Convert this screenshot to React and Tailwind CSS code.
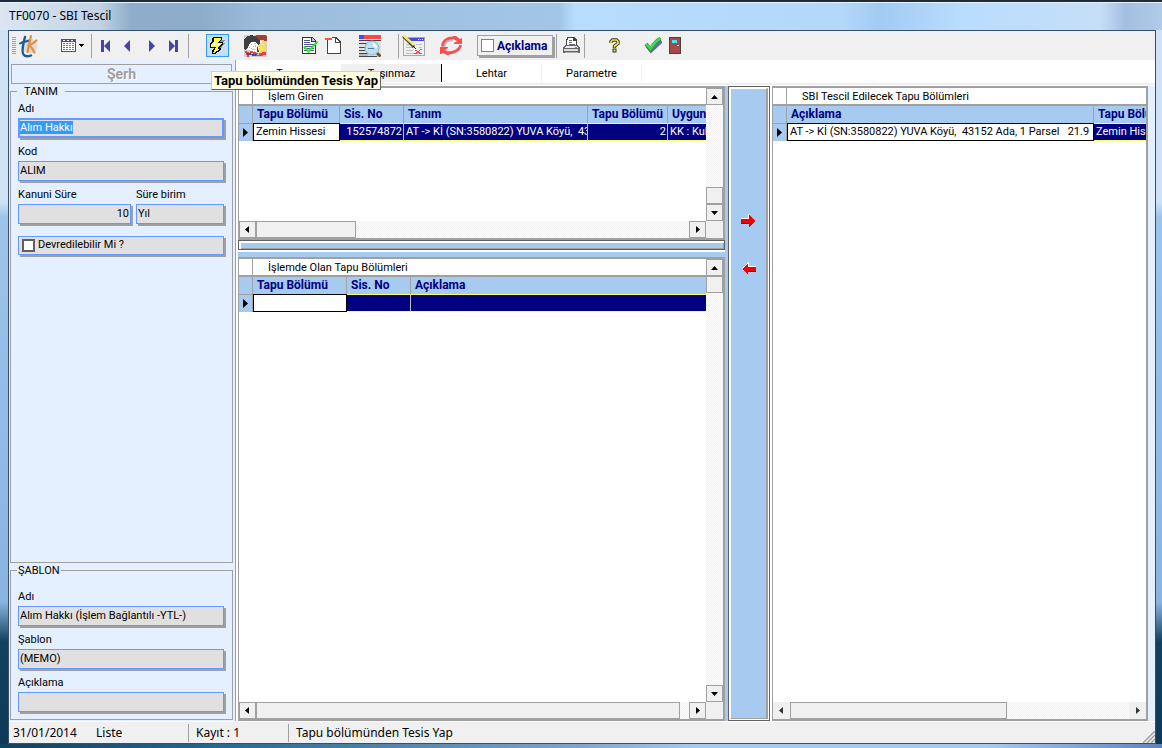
import { useEffect, useRef } from "react";
import clsx from "clsx";

const tabs = ["Tanım", "Taşınmaz", "Lehtar", "Parametre"];

const girenColumns = [
  { title: "Tapu Bölümü", width: "w-[87px]" },
  { title: "Sis. No", width: "w-[64px]", right: true },
  { title: "Tanım", width: "w-[184px]" },
  { title: "Tapu Bölümü", width: "w-[80px]", right: true },
  { title: "Uygunluk", width: "w-[120px]" },
];

const girenRow = [
  "Zemin Hissesi",
  "152574872",
  "AT -> Kİ (SN:3580822) YUVA Köyü,  43152 Ada",
  "2",
  "KK : Kullanım",
];

const olanColumns = [
  { title: "Tapu Bölümü", width: "w-[94px]" },
  { title: "Sis. No", width: "w-[64px]" },
  { title: "Açıklama", width: "w-[600px]" },
];

const tescilColumns = [
  { title: "Açıklama", width: "w-[307px]" },
  { title: "Tapu Bölümü", width: "w-[120px]" },
];

const tescilRow = [
  "AT -> Kİ (SN:3580822) YUVA Köyü,  43152 Ada, 1 Parsel   21.9",
  "Zemin Hissesi",
];

const Separator = ({ className }) => (
  <div className={clsx("h-6 w-px shrink-0 bg-[#a0a0a0]", className)} />
);

const ToolButton = ({ label, className, children }) => (
  <button
    type="button"
    aria-label={label}
    className={clsx("flex h-6 shrink-0 items-center justify-center", className)}
  >
    {children}
  </button>
);

const LogoIcon = () => (
  <svg width="22" height="24" viewBox="0 0 22 24" fill="none" strokeLinecap="round">
    <circle cx="12" cy="12" r="7.5" fill="#dcdde0" />
    <path d="M7 3C5.500 9 3 17 5.500 20.500C7 22.500 10.500 22.500 13 21.500" stroke="#1b5c97" strokeWidth="2.400" />
    <path d="M2 9.500C5 7.500 9 7.500 12 6.500" stroke="#1b5c97" strokeWidth="2" />
    <path d="M13 2C11.500 8 10.500 13 9.500 18" stroke="#f08a3c" strokeWidth="2.200" />
    <path d="M18.500 6.500C16 9 13 10.500 11 11.500C13.500 13 15 15.500 16.500 18.500" stroke="#f08a3c" strokeWidth="2.200" />
  </svg>
);

const CalendarIcon = () => (
  <svg width="24" height="14" viewBox="0 0 24 14" shapeRendering="crispEdges">
    <path d="M0 0h15v13H0z" fill="#4848a8" />
    <path d="M1 3h13v9H1z" fill="#fff" />
    <path d="M2 1h2v1H2zM6 1h2v1H6zM10 1h2v1h-2z" fill="#fff" />
    <path d="M2 4h2v1H2zM5 4h2v1H5zM8 4h2v1H8zM11 4h2v1h-2zM2 6h2v1H2zM5 6h2v1H5zM8 6h2v1H8zM11 6h2v1h-2zM2 8h2v1H2zM5 8h2v1H5zM8 8h2v1H8zM11 8h2v1h-2zM2 10h2v1H2zM5 10h2v1H5zM8 10h2v1H8zM11 10h2v1h-2z" fill="#777" />
    <path d="M18 5h5v1h-1v1h-1v1h-1v-1h-1v-1h-1z" fill="#000" />
  </svg>
);

const NavIcon = ({ flip, bar }) => (
  <svg width="10" height="12" viewBox="0 0 10 12" className={clsx(flip && "-scale-x-100")}>
    {bar && <path d="M1 0h3v12H1z" fill="#4545a8" />}
    <path d={bar ? "M10 0v12L4 6z" : "M8 0v12L2 6z"} fill="#4545a8" />
  </svg>
);

const LightningIcon = () => (
  <svg width="17" height="18" viewBox="0 0 17 18" shapeRendering="crispEdges">
    <path d="M10 3h6l-2 3h2l-3 4h1l-8 7H6l2-7z" fill="#909090" />
    <path d="M4 0h9v2l-2 3h3v2l-4 4h2v2l-6 4H3v-3l2-3H1V7l2-3V2z" fill="#000" />
    <path d="M5 1h7v1L9 5v1h4L9 10v2h2l-6 4H4l3-6H2V8l3-4V3z" fill="#ffff40" />
    <path d="M6 2h2v1H6zM5 4h1v2H5zM5 7h2v1H5zM9 7h1v1H9zM6 12h1v1H6z" fill="#fff" />
  </svg>
);

const PeopleIcon = () => (
  <svg width="23" height="22" viewBox="0 0 23 22" shapeRendering="crispEdges">
    <path d="M0 0h23v22H0z" fill="#d0d0d0" />
    <path d="M12 0h9l2 1v5h-3V5h-5l-2-2z" fill="#a04040" />
    <path d="M15 5h5l1 2v4h1v2h-1v3h-3v2h-5v-8l2-1z" fill="#f8dc60" />
    <path d="M16 6h2v2h-2zM18 9h2v1h-2zM14 12h2v1h-2zM17 14h2v1h-2zM15 16h1v1h-1z" fill="#fff" />
    <path d="M0 9V4l3-3 5-1 5 2 3 4v2l-2 2-2-2H8l-3 2v3H3l-1 2-2-1z" fill="#404040" />
    <path d="M13 12h1v3h1v2h-3v-3z" fill="#704040" />
    <path d="M5 9l3-2h4l2 3-1 3v4H7l-1-2H3l1-2z" fill="#fff" />
    <path d="M7 9h1v1H7zM10 8h2v1h-2zM11 10h1v2h-1zM9 11h1v1H9zM5 12h1v1H5zM8 14h3v1H8zM7 13h1v1H7zM10 16h1v1h-1z" fill="#bbb" />
    <path d="M1 16h2v1h2v2h4v1H5v2H3v-2H2v-2H1z" fill="#e04040" />
    <path d="M3 18h4v1h6v1h4v1H8v-1H3z" fill="#4848a8" />
    <path d="M6 16h3v1h3v1h2v1H9v-1H6zM12 20h3v-2h3v-1h4v3h-3v1h-7z" fill="#e84040" />
  </svg>
);

const DocCheckIcon = () => (
  <svg width="16" height="17" viewBox="0 0 16 17" shapeRendering="crispEdges">
    <path d="M0 0h10l4 4v13H0z" fill="#333" />
    <path d="M1 1h8v4h4v11H1z" fill="#fff" />
    <path d="M10 1v3h3z" fill="#ccc" />
    <path d="M2 3h6v1H2zM2 5h6v1H2zM2 7h10v1H2zM2 9h10v1H2zM2 11h10v1H2zM2 13h10v1H2z" fill="#50508c" />
    <path d="M2 9.500l4.500 5L15.500 4.500" fill="none" stroke="#30e830" strokeWidth="2" shapeRendering="auto" />
  </svg>
);

const DocRemoveIcon = () => (
  <svg width="16" height="17" viewBox="0 0 16 17" shapeRendering="crispEdges">
    <path d="M2 0h9l5 5v12H2z" fill="#444" />
    <path d="M3 1h7v5h5v10H3z" fill="#fff" />
    <path d="M11 2v3h3z" fill="#fff" />
    <path d="M0 0h7v1H0z" fill="#f0f0f0" />
    <path d="M0 1h7v2H0z" fill="#f85840" />
  </svg>
);

const TableSearchIcon = () => (
  <svg width="22" height="22" viewBox="0 0 22 22">
    <path d="M0 0h5v4H0z" fill="#4848e8" />
    <path d="M5 0h17v4H5z" fill="#ff4848" />
    <path d="M0 4h22v18H0z" fill="#e0e0e0" />
    <path d="M0 5h22v1H0zM0 8h8v1H0zM0 12h8v1H0zM0 15h6v1H0zM0 18h9v1H0zM0 21h18v1H0z" fill="#444" />
    <path d="M0 19h9v2H0z" fill="#bbb" />
    <path d="M17.500 17.500l4 4" stroke="#6a5030" strokeWidth="3" />
    <circle cx="13" cy="13" r="7" fill="#b8dff5" stroke="#98b0c0" />
    <path d="M9 13.500h6" stroke="#5a7a98" />
    <path d="M13 8c3 0 5 2 5 5l-3-1z" fill="#f0fbff" />
  </svg>
);

const PenFormIcon = () => (
  <svg width="23" height="21" viewBox="0 0 23 21" shapeRendering="crispEdges">
    <path d="M1 2h22v19H1z" fill="#a8a8a8" />
    <path d="M2 3h20v17H2z" fill="#f0f0f0" />
    <path d="M6 3h16v3H6z" fill="#4848e0" />
    <path d="M16 4h1v1h-1zM18 4h1v1h-1zM20 4h1v1h-1z" fill="#fff" />
    <path d="M4 9h4v1H4zM14 9h6v1h-6zM4 12h7v1H4zM17 12h3v1h-3zM4 15h7v1H4zM4 18h16v1H4z" fill="#c0c0c0" />
    <path d="M1 1l11 11" stroke="#444" strokeWidth="3" shapeRendering="auto" />
    <path d="M1 0l11 10" stroke="#f0ec60" strokeWidth="2.400" shapeRendering="auto" />
    <path d="M11 11l3 3" stroke="#222" />
    <path d="M13 15h2v1h2v-1h1v-1h2v1h-2v1h-1v1h1v1h2v1h-3v-1h-2v1h-3v-1h2v-1h1v-1h-2z" fill="#f04848" />
  </svg>
);

const RefreshIcon = () => (
  <svg width="23" height="20" viewBox="0 0 23 20" fill="none">
    <path d="M13 4C8 3.500 4 7 4.500 11M20.500 10C19 14 14 18 8 17.500" stroke="#b8b8b8" strokeWidth="2" />
    <path d="M14 2C8 1 2 5 2.500 10.500M20.500 9C20.500 13 14 17.500 8 16.500" stroke="#f85050" strokeWidth="2.600" />
    <path d="M13 0h3l4 3 2-1v6h-8V7l3-2-4-2z" fill="#f85050" />
    <path d="M9 19H7l-4-2-2 1H0v-7h8v1l-3 2 4 2z" fill="#f85050" />
  </svg>
);

const PrinterIcon = () => (
  <svg width="17" height="17" viewBox="0 0 17 17" shapeRendering="crispEdges">
    <path d="M4 0h7l3 3v6H3V4z" fill="#444" />
    <path d="M5 1h5v3h3v5H4V5z" fill="#fff" />
    <path d="M6 3h3v1H6zM6 5h3v1H6zM6 7h6v1H6z" fill="#666" />
    <path d="M2 8h13l2 3v5H0v-5z" fill="#666" />
    <path d="M3 9h11l1 2H2z" fill="#eee" />
    <path d="M1 12h14v2H1z" fill="#ddd" />
    <path d="M12 10h2v1h-2z" fill="#e06060" />
    <path d="M2 15h13v1H2z" fill="#aaa" />
  </svg>
);

const HelpIcon = () => (
  <svg width="11" height="15" viewBox="0 0 11 15" fill="none">
    <path d="M2 5V3.500L3.500 2h4L9 3.500V5.500L5.500 8v2" stroke="#333" strokeWidth="3.400" />
    <path d="M3.500 10.500h4v4h-4z" fill="#333" />
    <path d="M2 5V3.500L3.500 2h4L9 3.500V5.500L5.500 8v1.500" stroke="#f4ec30" strokeWidth="1.600" />
    <path d="M4.500 11.500h2v2h-2z" fill="#f4ec30" />
  </svg>
);

const AcceptIcon = () => (
  <svg width="18" height="17" viewBox="0 0 18 17" fill="none">
    <path d="M3 9l4 5L17.500 4" stroke="#6868b0" strokeWidth="3.500" />
    <path d="M2 7l4.500 5.500C9 8 12 4 16.500 1.500" stroke="#309838" strokeWidth="3.800" />
    <path d="M2 7l4.500 4.500C9 7.500 12 4 16.500 1" stroke="#48d850" strokeWidth="2.400" />
  </svg>
);

const DoorIcon = () => (
  <svg width="12" height="17" viewBox="0 0 12 17" shapeRendering="crispEdges">
    <path d="M0 0h12v17H0z" fill="#444" />
    <path d="M1 1h10v15H1z" fill="#a84848" />
    <path d="M3 3h5v3H3z" fill="#40e8f0" />
    <path d="M8 8h2v1H8z" fill="#e8e040" />
  </svg>
);

const MoveIcon = ({ flip }) => (
  <svg width="15" height="14" viewBox="0 0 15 14" className={clsx(flip && "-scale-x-100")} shapeRendering="crispEdges">
    <path d="M0 4h7V0l7 6H0z" fill="#fff" />
    <path d="M0 5h8V1l6 6-6 6v-3H0z" fill="#f00000" />
    <path d="M0 9h8v1H0z" fill="#900000" />
  </svg>
);

const Toolbar = () => (
  <div className="flex h-[29px] shrink-0 items-center bg-[#f0f0f0] pl-[3px]">
    <div className="h-[18px] w-1 shrink-0 bg-[repeating-linear-gradient(#a0a0a0_0_1px,#f0f0f0_1px_2px)]" />
    <ToolButton label="Takbis" className="ml-px w-6">
      <LogoIcon />
    </ToolButton>
    <ToolButton label="Liste" className="ml-[19px] w-[26px]">
      <CalendarIcon />
    </ToolButton>
    <Separator className="ml-[5px]" />
    <ToolButton label="İlk kayıt" className="ml-[2px] w-[22px]">
      <NavIcon bar />
    </ToolButton>
    <ToolButton label="Önceki kayıt" className="w-[22px]">
      <NavIcon />
    </ToolButton>
    <ToolButton label="Sonraki kayıt" className="ml-[3px] w-[22px]">
      <NavIcon flip />
    </ToolButton>
    <ToolButton label="Son kayıt" className="w-[22px]">
      <NavIcon flip bar />
    </ToolButton>
    <Separator className="ml-[3px]" />
    <div className="relative ml-[17px] shrink-0">
      <button
        type="button"
        aria-describedby="tesis-tip"
        aria-label="Tesis Yap"
        className="flex h-[23px] w-[23px] items-center justify-center border border-[#3399ff] bg-[#c2e0ff]"
      >
        <LightningIcon />
      </button>
      <div
        id="tesis-tip"
        role="tooltip"
        className="absolute top-[37px] left-[5px] z-10 border border-[#606060] border-t-[#d0d0c0] border-l-[#d0d0c0] bg-[#ffffe1] px-[2px] text-[13px] leading-[17px] font-bold whitespace-nowrap"
      >
        Tapu bölümünden Tesis Yap
      </div>
    </div>
    <ToolButton label="Kişiler" className="ml-[14px] w-6">
      <PeopleIcon />
    </ToolButton>
    <ToolButton label="Belge onayla" className="ml-[31px] w-6">
      <DocCheckIcon />
    </ToolButton>
    <ToolButton label="Belge çıkar" className="w-[22px]">
      <DocRemoveIcon />
    </ToolButton>
    <ToolButton label="Sorgula" className="ml-[14px] w-6">
      <TableSearchIcon />
    </ToolButton>
    <Separator className="ml-4" />
    <ToolButton label="Düzenle" className="ml-[2px] w-6">
      <PenFormIcon />
    </ToolButton>
    <ToolButton label="Yenile" className="ml-[14px] w-6">
      <RefreshIcon />
    </ToolButton>
    <label className="ml-[14px] flex h-[21px] w-[76px] shrink-0 items-center gap-[3px] border border-[#a0a0a0] pl-[3px] text-xs font-bold text-[#000080] shadow-[2px_2px_0_#a0a0a0]">
      <input type="checkbox" className="size-[13px] shrink-0 appearance-none border border-[#808080] bg-white" />
      Açıklama
    </label>
    <Separator className="ml-[3px]" />
    <ToolButton label="Yazdır" className="ml-[2px] w-6">
      <PrinterIcon />
    </ToolButton>
    <Separator className="ml-px" />
    <ToolButton label="Yardım" className="ml-[17px] w-6">
      <HelpIcon />
    </ToolButton>
    <ToolButton label="Tamam" className="ml-[15px] w-6">
      <AcceptIcon />
    </ToolButton>
    <ToolButton label="Çıkış" className="w-5">
      <DoorIcon />
    </ToolButton>
  </div>
);

const Field = ({ id, label, value, className, right, active }) => {
  const ref = useRef(null);

  useEffect(() => {
    if (active) {
      ref.current.focus();
      ref.current.select();
    }
  }, [active]);

  return (
    <div className={clsx("flex flex-col gap-[3px]", className)}>
      <label htmlFor={id} className="h-[14px] leading-[16px]">
        {label}
      </label>
      <input
        id={id}
        ref={ref}
        readOnly
        defaultValue={value}
        className={clsx(
          "h-[20px] w-full border-[#6699ff] bg-[#e0e0e0] pb-[2px] shadow-[2px_2px_0_#a0a0a0] outline-none selection:bg-[#3399ff] selection:text-white",
          active ? "border-2" : "border px-px",
          right && "text-right"
        )}
      />
    </div>
  );
};

const SidePanel = () => (
  <aside className="flex w-[227px] shrink-0 flex-col border-r border-[#a0a0a0] bg-[#e4f0ff] pt-1 pr-[2px] pl-px">
    <h1 className="mx-px h-5 border border-[#a0a0a0] text-center text-sm leading-[19px] font-bold text-[#a0a0a0] [text-shadow:1px_1px_0_#fff]">
      Şerh
    </h1>
    <fieldset className="min-w-0 flex-1 border border-[#a0a0a0]">
      <legend className="ml-[6px] h-[14px] px-[7px] leading-[16px]">TANIM</legend>
      <div className="flex flex-col gap-[6px] pt-[3px] pr-[8px] pl-[7px]">
        <Field id="tanim-adi" label="Adı" value="Alım Hakkı" active />
        <Field id="tanim-kod" label="Kod" value="ALIM" />
        <div className="flex gap-[5px]">
          <Field id="kanuni-sure" label="Kanuni Süre" value="10" right className="w-[113px]" />
          <Field id="sure-birim" label="Süre birim" value="Yıl" className="min-w-0 flex-1" />
        </div>
        <label className="mt-[6px] flex h-[19px] items-center gap-[3px] border border-[#6699ff] bg-[#e0e0e0] pl-[3px] shadow-[2px_2px_0_#a0a0a0]">
          <input type="checkbox" className="size-[13px] appearance-none border-2 border-[#606060] bg-white" />
          Devredilebilir Mi ?
        </label>
      </div>
    </fieldset>
    <fieldset className="mb-px min-w-0 border border-[#a0a0a0]">
      <legend className="ml-[6px] h-[14px] px-px leading-[16px]">ŞABLON</legend>
      <div className="flex flex-col gap-[6px] pt-3 pr-[8px] pb-[7px] pl-[7px]">
        <Field id="sablon-adi" label="Adı" value="Alım Hakkı (İşlem Bağlantılı -YTL-)" />
        <Field id="sablon" label="Şablon" value="(MEMO)" />
        <Field id="sablon-aciklama" label="Açıklama" value="" />
      </div>
    </fieldset>
  </aside>
);

const arrows = {
  up: "M0 6h7L3.500 2z",
  down: "M0 2h7L3.500 6z",
  left: "M5 0v7L1 3.500z",
  right: "M2 0v7l4-3.500z",
};

const ScrollButton = ({ dir, flat }) => (
  <button
    type="button"
    aria-label={dir}
    className={clsx(
      "flex size-[17px] shrink-0 items-center justify-center bg-[#f0f0f0]",
      !flat && "border border-[#a0a0a0]"
    )}
  >
    <svg width="7" height="7" viewBox="0 0 7 7">
      <path d={arrows[dir]} fill={flat ? "#333" : "#000"} />
    </svg>
  </button>
);

const track = "bg-[repeating-conic-gradient(#ffffff_0_25%,#f0f0f0_0_50%)] bg-[length:2px_2px]";

const VScroll = ({ atEnd }) => (
  <div className={clsx("flex w-[17px] shrink-0 flex-col", track)}>
    <ScrollButton dir="up" />
    <div className={clsx("flex flex-1 flex-col", atEnd && "justify-end")}>
      <div className="h-[17px] border border-[#a0a0a0] bg-[#f0f0f0]" />
    </div>
    <ScrollButton dir="down" />
  </div>
);

const HScroll = ({ thumb, flat }) => (
  <div className={clsx("flex h-[17px] min-w-0 flex-1", track)}>
    <ScrollButton dir="left" flat={flat} />
    <div className="flex flex-1">
      <div className={clsx("border border-[#a0a0a0] bg-[#f0f0f0]", thumb)} />
    </div>
    <ScrollButton dir="right" flat={flat} />
  </div>
);

const DataGrid = ({ caption, columns, row, thumb, vscroll, atEnd, flat, className }) => (
  <section
    className={clsx(
      "flex min-h-0 min-w-0 flex-col border-t-2 border-r-2 border-b-2 border-l border-[#a0a0a0] bg-white",
      className
    )}
  >
    <div className="flex min-h-0 flex-1">
      <div className="min-w-0 flex-1 overflow-hidden">
        <table className="w-0 min-w-full table-fixed border-separate border-spacing-0 text-left whitespace-pre">
          <colgroup>
            <col className="w-[14px]" />
            {columns.map((col, i) => (
              <col key={i} className={col.width} />
            ))}
          </colgroup>
          <thead>
            <tr className="h-[18px] leading-[15px]">
              <td className="border-r border-b-2 border-[#a0a0a0]" />
              <th colSpan={columns.length} className="border-b-2 border-[#a0a0a0] pl-[15px] font-normal">
                {caption}
              </th>
            </tr>
            <tr className="h-[17px] bg-[#a6caf0] text-xs leading-[17px] font-bold text-[#000080]">
              <td className="border-r border-[#a0a0a0]" />
              {columns.map((col, i) => (
                <th key={i} className="overflow-hidden border-r border-[#a0a0a0] pl-[4px]">
                  {col.title}
                </th>
              ))}
            </tr>
          </thead>
          <tbody>
            <tr className="h-[18px] leading-[16px]">
              <td className="border-t border-r border-[#a0a0a0] bg-[#a6caf0] pl-[4px]">
                <svg width="5" height="9" viewBox="0 0 5 9" className="block">
                  <path d="M0 0v9l5-4.500z" fill="#000" />
                </svg>
              </td>
              {columns.map((col, i) => (
                <td
                  key={i}
                  className={clsx(
                    "overflow-hidden",
                    col.right ? "pr-px text-right" : "pl-[2px]",
                    i === 0
                      ? "border border-black bg-white"
                      : "border-y border-r border-y-[#ffff60] border-r-[#c0c0c0] bg-[#000080] text-white"
                  )}
                >
                  {row ? row[i] : ""}
                </td>
              ))}
            </tr>
          </tbody>
        </table>
      </div>
      {vscroll && <VScroll atEnd={atEnd} />}
    </div>
    <div className="flex shrink-0">
      <HScroll thumb={thumb} flat={flat} />
      {vscroll && <div className="size-[17px] bg-[#f0f0f0]" />}
    </div>
  </section>
);

const StatusBar = () => (
  <footer className="flex h-[22px] shrink-0 items-center border-t border-white bg-[#f0f0f0] font-['Noto_Sans',sans-serif] text-xs">
    <div className="w-[82px] shrink-0 pl-[4px] leading-[18px]">31/01/2014</div>
    <div className="w-[98px] shrink-0 border-r border-[#a0a0a0] pl-[5px] leading-[18px]">Liste</div>
    <div className="ml-px w-[99px] shrink-0 border-r border-[#a0a0a0] pl-[6px] leading-[18px]">Kayıt : 1</div>
    <div className="flex-1 pl-[7px] leading-[18px]">Tapu bölümünden Tesis Yap</div>
    <svg width="12" height="12" viewBox="0 0 12 12" className="self-end" stroke="#a0a0a0" strokeWidth="1.500">
      <path d="M0 12L12 0M4 12l8-8M8 12l4-4" />
    </svg>
  </footer>
);

const App = () => {
  return (
    <div className="flex h-screen min-h-[480px] flex-col overflow-hidden border-t-2 border-[#1c2c3c] bg-[linear-gradient(#cfe1f4_0,#cfe1f4_200px,#9cc4ec_215px,#8ab4e0_600px,#12405f_640px,#0d3a58_100%)] font-[Roboto,'Liberation_Sans',sans-serif] text-[11px] text-black">
      <header className="h-7 shrink-0 border-t border-[#e8f4ff] bg-[linear-gradient(90deg,#dbe6f2_0,#c3d3e4_100px,#90aecb_130px,#8dacca_200px,#9dbcdc_260px,#a4c6e6_560px,#b9dcfd_575px,#b4d8fa_840px,#a2cbf2_880px,#b9dcfd_960px,#c6dff8_1100px,#a4bfe0_1125px,#b0cbe8_100%)] pl-[9px] font-['Noto_Sans',sans-serif] text-xs leading-[25px]">
        TF0070 - SBI Tescil
      </header>
      <div className="flex min-h-0 flex-1 bg-[linear-gradient(#a8c4e4,#5b86bd)_right/7px_100%_no-repeat] pr-[6px] pl-2">
        <main className="flex min-w-0 flex-1 flex-col border border-[#35506c] bg-white">
          <Toolbar />
          <div className="flex min-h-0 flex-1">
            <SidePanel />
            <div className="flex min-w-0 flex-1 flex-col pl-[2px]">
              <div role="tablist" className="flex h-[25px] shrink-0 items-start border-b-2 border-[#f0f0f0] pt-1 pl-1">
                {tabs.map((tab, i) => (
                  <button
                    key={tab}
                    type="button"
                    role="tab"
                    aria-selected={i === 1}
                    className={clsx(
                      "h-[18px] w-[100px] border-r pt-[2px]",
                      i === 1 ? "border-black bg-[#f0f0f0]" : "border-[#f0f0f0]"
                    )}
                  >
                    {tab}
                  </button>
                ))}
              </div>
              <div className="flex min-h-0 flex-1 pt-px">
                <div className="flex min-w-0 shrink grow-[487] basis-0 flex-col bg-[#a6caf0]">
                  <DataGrid
                    caption="İşlem Giren"
                    columns={girenColumns}
                    row={girenRow}
                    thumb="w-[23%]"
                    vscroll
                    atEnd
                    className="h-[154px] shrink-0"
                  />
                  <div className="h-3 shrink-0 bg-white">
                    <div className="h-[10px] border border-[#606060] bg-white pt-[2px] pl-[2px]">
                      <div className="h-[6px] border-r border-b border-[#a0a0a0] bg-[#a6caf0]" />
                    </div>
                  </div>
                  <DataGrid
                    caption="İşlemde Olan Tapu Bölümleri"
                    columns={olanColumns}
                    thumb="w-[98%]"
                    vscroll
                    className="mt-[5px] flex-1"
                  />
                </div>
                <div className="w-[3px] shrink-0 bg-[#a6caf0]" />
                <div className="mr-[2px] flex w-[42px] shrink-0 border border-[#606060] bg-white p-px">
                  <div className="flex flex-1 flex-col items-center gap-6 border border-r-2 border-white border-r-[#a0a0a0] border-b-[#a0a0a0] bg-[#a6caf0] pt-[120px]">
                    <button type="button" aria-label="Ekle" className="flex h-6 w-6 items-center justify-center">
                      <MoveIcon />
                    </button>
                    <button type="button" aria-label="Çıkar" className="flex h-6 w-6 items-center justify-center">
                      <MoveIcon flip />
                    </button>
                  </div>
                </div>
                <div className="flex min-w-0 shrink grow-[376] basis-0 flex-col">
                  <DataGrid
                    caption="SBI Tescil Edilecek Tapu Bölümleri"
                    columns={tescilColumns}
                    row={tescilRow}
                    thumb="w-[64%]"
                    flat
                    className="flex-1"
                  />
                </div>
                <div className="w-[7px] shrink-0 bg-[#e4f0ff]" />
              </div>
            </div>
          </div>
          <StatusBar />
        </main>
      </div>
      <div className="h-1 shrink-0 bg-[linear-gradient(90deg,#12405f_0,#2a6a94_20%,#7fa6cc_50%,#a6caf0_60%,#a6caf0_85%,#5b86bd_100%)]" />
    </div>
  );
};

export default App;
